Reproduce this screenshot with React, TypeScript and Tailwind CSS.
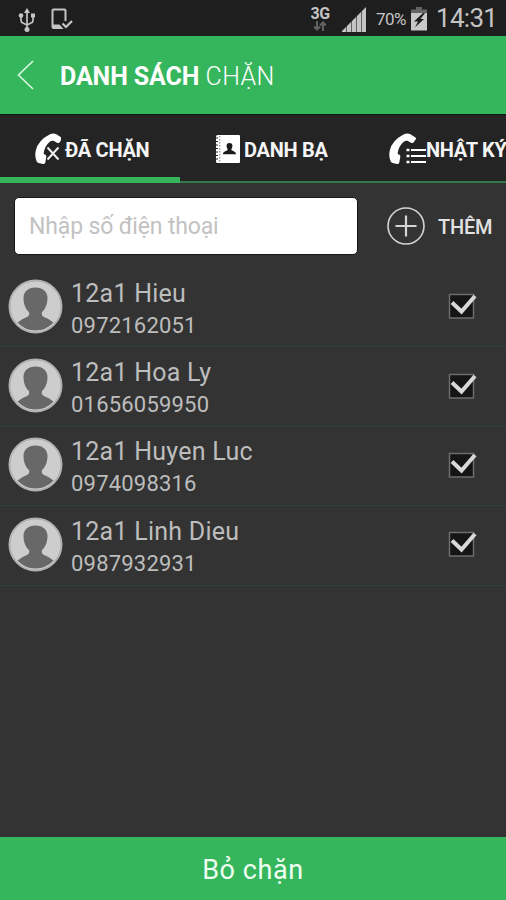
import type { ReactNode } from "react";

type Contact = {
  name: string;
  phone: string;
};

const contacts: Contact[] = [
  { name: "12a1 Hieu", phone: "0972162051" },
  { name: "12a1 Hoa Ly", phone: "01656059950" },
  { name: "12a1 Huyen Luc", phone: "0974098316" },
  { name: "12a1 Linh Dieu", phone: "0987932931" },
];

function UsbIcon() {
  return (
    <svg width="18" height="26" viewBox="0 0 18 26" fill="none" stroke="#c4c4c4" strokeWidth="1.7">
      <path d="M9 4v18M3 9v4.500q0 2 2 2.500l4 2 4-2q2-.5 2-2.500V9" />
      <path d="M9 1l3 5H6z" fill="#c4c4c4" stroke="none" />
      <circle cx="9" cy="22.500" r="2.500" fill="#c4c4c4" stroke="none" />
      <circle cx="3" cy="8.500" r="2.300" fill="#c4c4c4" stroke="none" />
      <path d="M13 6.500h4v4h-4z" fill="#c4c4c4" stroke="none" />
    </svg>
  );
}

function PhoneCheckIcon() {
  return (
    <svg width="22" height="22" viewBox="0 0 22 22" fill="none">
      <path d="M10 20H2.500q-1 0-1-1V2.500q0-1 1-1h11q1 0 1 1V13" stroke="#c4c4c4" strokeWidth="2" />
      <path d="M2 16.500h6.500l4 4.500H2z" fill="#c4c4c4" />
      <path d="M11.500 15.500l3.500 3.500 6-6" stroke="#c4c4c4" strokeWidth="2.200" />
    </svg>
  );
}

function SignalIcon() {
  return (
    <svg width="24" height="25" viewBox="0 0 24 25" fill="#c4c4c4">
      <path d="M0 25v-1l24-24v25z" />
      <path d="M4.500 19v6M9.500 14v11M14.500 9v16M19.500 4v21" stroke="#1e1e1e" strokeWidth="0.600" />
    </svg>
  );
}

function BatteryIcon() {
  return (
    <svg width="16" height="24" viewBox="0 0 16 24">
      <path d="M5 0h6v2.500h5V7H0V2.500h5z" fill="#656565" />
      <path d="M0 6h16v17.500H0z" fill="#c8c8c8" />
      <path d="M12 6L3 14.500h4l-3 6 9-8.500H9.500l4.500-6z" fill="#1e1e1e" />
    </svg>
  );
}

function Handset() {
  return (
    <path
      d="M14.500 1.600Q18 -.2 21 1L26.500 4.500Q27.500 5.200 26.800 6.200L24.500 9.500Q23.500 10.500 22 9.800L18.500 7.800Q16.500 7.200 14.800 8.800Q9.800 13 8.700 20Q8.600 21.200 10 21.600Q11.600 22.200 11.300 23.800L10.300 29.500Q9.800 31.200 8 31L3.500 30Q1.500 29.300 1 26.500Q-.3 22 .8 17.500Q3 7.500 14.500 1.600Z"
      fill="#fff"
    />
  );
}

function BlockedCallIcon() {
  return (
    <svg width="26" height="32" viewBox="0 0 28 32" preserveAspectRatio="xMinYMid slice">
      <Handset />
      <path d="M12.500 14.500l11 12M23.500 14.500l-11 12" stroke="#f2f2f2" strokeWidth="1.900" />
    </svg>
  );
}

function CallLogIcon() {
  return (
    <svg width="37" height="32" viewBox="0 0 37 32" className="shrink-0">
      <Handset />
      <path d="M17.500 17h3M17.500 23h3M17.500 29h3" stroke="#fff" strokeWidth="2.300" />
      <path d="M22 17h15M22 23h15M22 29h15" stroke="#fff" strokeWidth="1.900" />
    </svg>
  );
}

function AddressBookIcon() {
  return (
    <svg width="25" height="28" viewBox="0 0 25 28">
      <path d="M2.500 0H24q1 0 1 1v26q0 1-1 1H2.500q-1.500 0-1.500-1.500v-25Q1 0 2.500 0z" fill="#fff" />
      <path d="M4.800 1v26" stroke="#777" strokeWidth="1" strokeDasharray="1.500 1.500" />
      <path d="M0 3h3M0 6.500h3M0 10h3M0 13.500h3M0 17h3M0 20.500h3M0 24h3" stroke="#242424" strokeWidth="1" />
      <path
        d="M14.500 8c2.400 0 3.200 1.600 2.900 3.600-.2 1.400-1 2-1 3.200 0 1.400 4.600 1 4.600 4.400H8c0-3.400 4.600-3 4.600-4.400 0-1.200-.8-1.800-1-3.200-.3-2 .5-3.600 2.900-3.600z"
        fill="#1c1c1c"
      />
    </svg>
  );
}

function Avatar() {
  return (
    <svg width="55" height="55" viewBox="0 0 55 55" className="shrink-0">
      <circle cx="27.500" cy="27.500" r="26" fill="#cdcdcd" stroke="#b0b0b0" strokeWidth="2" />
      <path
        d="M27.500 8.500C35 8.500 39.500 13 39.500 19C39.500 25.500 37 30.500 34 33C33.300 35.500 34 37 36 38Q41.500 40 45.500 43.500Q38 51.500 27.500 51.500T9.500 43.500Q13.500 40 19 38C21 37 21.700 35.500 21 33C18 30.500 15.500 25.500 15.500 19C15.500 13 20 8.500 27.500 8.500Z"
        fill="#686868"
      />
    </svg>
  );
}

function Checkbox() {
  return (
    <svg width="30" height="28" viewBox="0 0 30 28" className="shrink-0">
      <path d="M2.500 2.500h24v23.500H2.500z" fill="#151515" stroke="#6c6c6c" strokeWidth="1.500" />
      <path d="M5 10.500l9.500 9L28 4" fill="none" stroke="#d8d8d8" strokeWidth="4" />
    </svg>
  );
}

function Tab({ icon, children, className }: { icon: ReactNode; children: string; className: string }) {
  return (
    <div className={`flex items-center shrink-0 text-[20px] font-bold whitespace-nowrap tracking-[-0.3px] ${className}`}>
      {icon}
      <span className="pt-px">{children}</span>
    </div>
  );
}

function ContactRow({ contact }: { contact: Contact }) {
  return (
    <li className="flex h-[79.400px] items-center border-b border-[#2d413a] pb-[2px] pl-2 pr-[29px]">
      <Avatar />
      <div className="ml-2 flex-1 pt-[6px] text-[#bdbdbd]">
        <div className="text-[25px] leading-[32px] tracking-[0.25px]">{contact.name}</div>
        <div className="text-[22px] leading-[31px] tracking-[0.2px]">{contact.phone}</div>
      </div>
      <Checkbox />
    </li>
  );
}

export default function App() {
  return (
    <div className="flex h-[900px] w-[506px] flex-col overflow-hidden bg-[#333333] font-['Roboto',sans-serif]">
      <div className="flex h-9 shrink-0 items-center bg-[#1e1e1e] pl-[18px] pr-[10px] text-[#c4c4c4]">
        <div className="mt-[3px]">
          <UsbIcon />
        </div>
        <div className="ml-[15px] mt-px">
          <PhoneCheckIcon />
        </div>
        <div className="ml-auto flex items-center">
          <div className="flex w-5 flex-col items-center">
            <span className="text-[16px] font-bold leading-[15px] tracking-[-0.5px]">3G</span>
            <svg width="12" height="10" viewBox="0 0 12 10" fill="none" stroke="#626262" strokeWidth="2">
              <path d="M3 0v8M0 5.500l3 3 3-3M9 10V2M6 4.500l3-3 3 3" />
            </svg>
          </div>
          <div className="ml-[12px] mt-[3px]">
            <SignalIcon />
          </div>
          <span className="ml-[10px] mt-[3px] w-[32px] text-[17px] tracking-[-0.5px]">70%</span>
          <div className="ml-[3px] mt-0.5">
            <BatteryIcon />
          </div>
          <span className="ml-[9px] w-[60px] text-[26px] leading-9 tracking-[-0.7px]">14:31</span>
        </div>
      </div>

      <header className="flex h-[79px] shrink-0 items-center border-b border-[#101c13] bg-[#35b65d] pl-[17px] text-white">
        <svg width="18" height="30" viewBox="0 0 18 30" fill="none" stroke="#d5f5dc" strokeWidth="1.700">
          <path d="M16 1L1.500 15 16 29" />
        </svg>
        <h1 className="ml-[25px] pt-[4px] text-[25px] whitespace-nowrap">
          <span className="font-bold tracking-[-0.100px]">DANH SÁCH</span> <span className="font-light tracking-[0.400px]">CHẶN</span>
        </h1>
      </header>

      <nav className="flex h-[69px] shrink-0 flex-col bg-[#242424] text-[#f5f5f5]">
        <div className="flex h-[62px] items-center pt-[6px]">
          <Tab icon={<BlockedCallIcon />} className="w-[180px] gap-1 pl-[35px]">
            ĐÃ CHẶN
          </Tab>
          <Tab icon={<AddressBookIcon />} className="w-[209px] gap-1 pl-[35px]">
            DANH BẠ
          </Tab>
          <Tab icon={<CallLogIcon />} className="w-[117px]">
            NHẬT KÝ
          </Tab>
        </div>
        <div className="flex h-[7px] items-end border-b border-[#333333]">
          <div className="h-[6px] w-[180px] bg-[#35b65d]" />
          <div className="h-[2px] flex-1 bg-[#35774d]" />
        </div>
      </nav>

      <div className="flex h-[84px] shrink-0 items-center pl-[14px] pr-[13px]">
        <input
          placeholder="Nhập số điện thoại"
          className="h-[58px] w-[344px] rounded-[5px] border border-[#161616] bg-white px-[14px] text-[23px] tracking-[-0.150px] outline-none placeholder:text-[#c2c2c2]"
        />
        <button className="ml-[28px] flex items-center gap-3 text-[20px] font-medium tracking-[-0.2px] text-[#e2e2e2]">
          <svg width="40" height="40" viewBox="0 0 40 40" fill="none" stroke="#d4d4d4">
            <circle cx="20" cy="20" r="18" strokeWidth="1.600" />
            <path d="M20 9.500v21M9.500 20h21" strokeWidth="2.200" />
          </svg>
          <span className="pt-px">THÊM</span>
        </button>
      </div>

      <ul className="flex-1">
        {contacts.map((contact) => (
          <ContactRow key={contact.phone} contact={contact} />
        ))}
      </ul>

      <button className="h-[63px] shrink-0 bg-[#35b65d] pt-[4px] text-[27px] tracking-[0.6px] text-[#effff2]">
        Bỏ chặn
      </button>
    </div>
  );
}
